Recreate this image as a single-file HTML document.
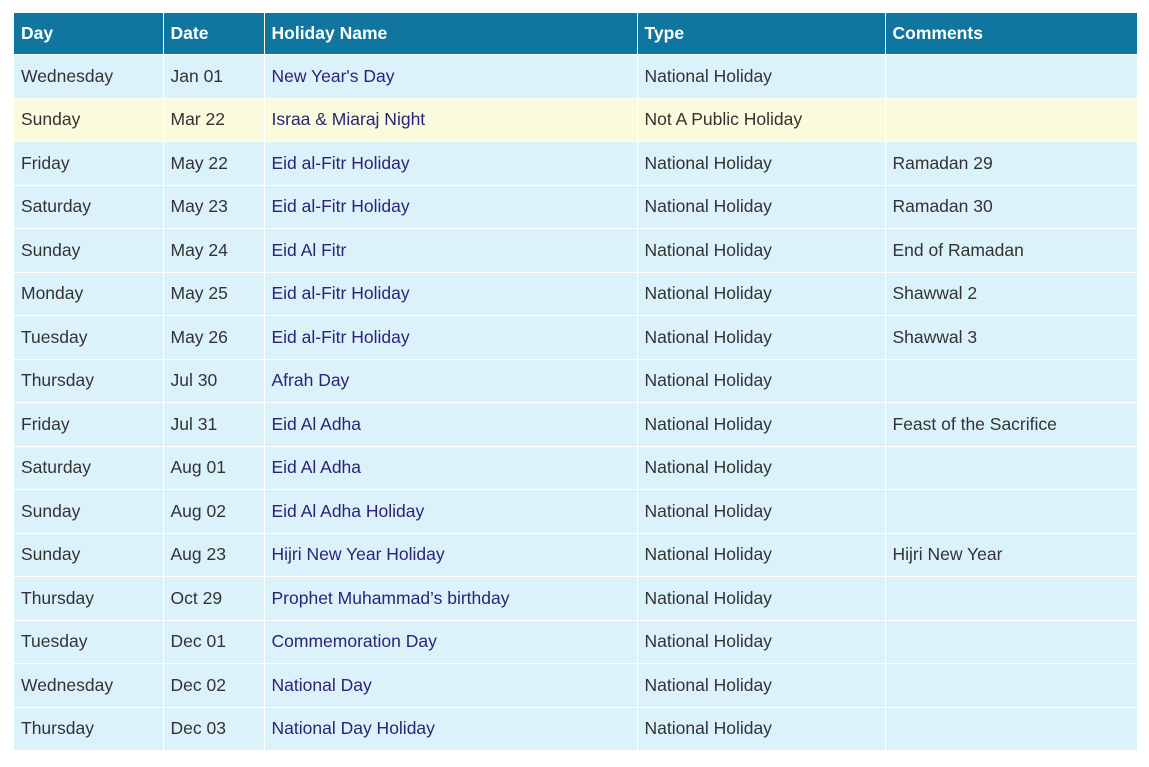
<!DOCTYPE html>
<html><head><meta charset="utf-8"><style>
body{margin:0;background:#fff;font-family:"Liberation Sans",sans-serif;}
table{position:absolute;left:14px;top:13px;width:1123px;border-collapse:collapse;table-layout:fixed;}
td,th{border:1px solid #fff;padding:0 0 0 7px;text-align:left;font-size:17.5px;color:#333;white-space:nowrap;overflow:hidden}
th{background:#11769f;color:#fff;font-weight:bold;height:41px;border-top:none}
td{background:#dcf2fb;height:42.5px}
tr.y td{background:#fafadc}
td:nth-child(3){color:#2b237a}
tr>*:first-child{border-left:none}tr>*:last-child{border-right:none}
</style></head><body>
<table>
<colgroup><col style="width:149px"><col style="width:101px"><col style="width:373px"><col style="width:248px"><col style="width:252px"></colgroup>
<tr><th>Day</th><th>Date</th><th>Holiday Name</th><th>Type</th><th>Comments</th></tr>
<tr><td>Wednesday</td><td>Jan 01</td><td>New Year's Day</td><td>National Holiday</td><td></td></tr>
<tr class="y"><td>Sunday</td><td>Mar 22</td><td>Israa &amp; Miaraj Night</td><td>Not A Public Holiday</td><td></td></tr>
<tr><td>Friday</td><td>May 22</td><td>Eid al-Fitr Holiday</td><td>National Holiday</td><td>Ramadan 29</td></tr>
<tr><td>Saturday</td><td>May 23</td><td>Eid al-Fitr Holiday</td><td>National Holiday</td><td>Ramadan 30</td></tr>
<tr><td>Sunday</td><td>May 24</td><td>Eid Al Fitr</td><td>National Holiday</td><td>End of Ramadan</td></tr>
<tr><td>Monday</td><td>May 25</td><td>Eid al-Fitr Holiday</td><td>National Holiday</td><td>Shawwal 2</td></tr>
<tr><td>Tuesday</td><td>May 26</td><td>Eid al-Fitr Holiday</td><td>National Holiday</td><td>Shawwal 3</td></tr>
<tr><td>Thursday</td><td>Jul 30</td><td>Afrah Day</td><td>National Holiday</td><td></td></tr>
<tr><td>Friday</td><td>Jul 31</td><td>Eid Al Adha</td><td>National Holiday</td><td>Feast of the Sacrifice</td></tr>
<tr><td>Saturday</td><td>Aug 01</td><td>Eid Al Adha</td><td>National Holiday</td><td></td></tr>
<tr><td>Sunday</td><td>Aug 02</td><td>Eid Al Adha Holiday</td><td>National Holiday</td><td></td></tr>
<tr><td>Sunday</td><td>Aug 23</td><td>Hijri New Year Holiday</td><td>National Holiday</td><td>Hijri New Year</td></tr>
<tr><td>Thursday</td><td>Oct 29</td><td>Prophet Muhammad’s birthday</td><td>National Holiday</td><td></td></tr>
<tr><td>Tuesday</td><td>Dec 01</td><td>Commemoration Day</td><td>National Holiday</td><td></td></tr>
<tr><td>Wednesday</td><td>Dec 02</td><td>National Day</td><td>National Holiday</td><td></td></tr>
<tr><td>Thursday</td><td>Dec 03</td><td>National Day Holiday</td><td>National Holiday</td><td></td></tr>
</table>
</body></html>
